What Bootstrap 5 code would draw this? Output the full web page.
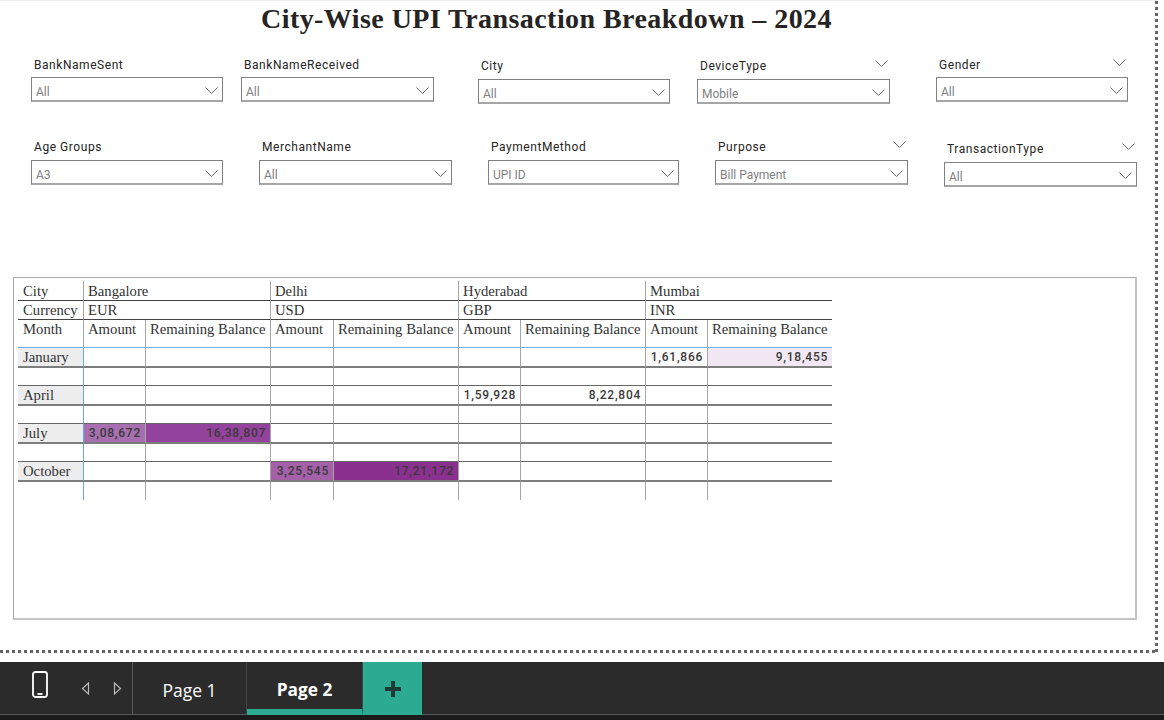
<!DOCTYPE html>
<html lang="en">

<head>
    <meta charset="UTF-8">
    <title>City-Wise UPI Transaction Breakdown</title>

    <link href="https://cdn.jsdelivr.net/npm/bootstrap@5.3.0/dist/css/bootstrap.min.css" rel="stylesheet">

    <style>
        html, body {
            height: 720px;
            overflow: hidden;
            background: #fff;
        }

        /* report canvas with the dotted page edge */
        .canvas-area {
            width: 1158px;
            height: 653px;
            margin-bottom: 9px;
            padding-top: 1px;
            border-top: 1px solid #efefef;
            background-image:
                linear-gradient(to right, #666 50%, transparent 50%),
                linear-gradient(to bottom, #666 50%, transparent 50%);
            background-size: 6px 3px, 3px 6px;
            background-position: left bottom, right top;
            background-repeat: repeat-x, repeat-y;
        }

        .report-title {
            font-family: "Liberation Serif", serif;
            font-weight: 700;
            font-size: 28px;
            line-height: 32px;
            letter-spacing: .44px;
            color: #252423;
            margin: 1px 0 0 261px;
            white-space: nowrap;
        }

        .slicer-row { height: 82px; }
        .slicer-row-1 { margin-top: 21px; }
        .slicer-row-2 { height: 139px; }

        .slicer {
            flex: none;
            font-family: Roboto, sans-serif;
        }

        .slicer-down { padding-top: 2px; }
        .slicer-row-1 .slicer-down { padding-top: 1px; }

        .slicer-head {
            display: flex;
            justify-content: space-between;
            align-items: center;
            height: 18px;
            padding: 0 2px 0 3px;
            font-size: 12px;
            letter-spacing: .55px;
            color: #252423;
        }

        .slicer-row-1 .slicer-head { margin-bottom: 3px; }
        .slicer-row-2 .slicer-head,
        .slicer-row-1 .slicer-down .slicer-head { margin-bottom: 4px; }
        .slicer-head .chev { margin-bottom: 5px; }

        .slicer-box {
            display: flex;
            justify-content: space-between;
            align-items: center;
            height: 25px;
            padding: 6px 4px 0 4px;
            border: 1px solid #808080;
            border-bottom: 2px solid #a6a6a6;
            font-size: 12px;
            color: #7f7f7f;
        }

        .slicer-box .chev { margin-bottom: 3px; }

        .chev {
            width: 13px;
            height: 7px;
            flex: none;
            fill: none;
            stroke: #666;
            stroke-width: 1;
        }

        /* matrix visual */
        .matrix-frame {
            width: 1124px;
            height: 343px;
            margin-left: 13px;
            padding: 3px 0 0 4px;
            border-style: solid;
            border-width: 1px 2px 2px 1px;
            border-color: #a9a9a9 #c4c4c4 #c4c4c4 #a9a9a9;
        }

        .matrix {
            table-layout: fixed;
            width: 814px;
            border-collapse: separate;
            border-spacing: 0;
            font-family: "Liberation Serif", serif;
            font-size: 14.700px;
            color: #333;
        }

        .matrix td {
            padding: 1px 4px 0;
            height: 20px;
            line-height: 17px;
            white-space: nowrap;
            overflow: hidden;
            border-left: 1px solid #a6a6a6;
            border-bottom: 2px solid #7d7d7d;
            vertical-align: middle;
        }

        .matrix td:first-child {
            border-left: 0;
            padding-left: 5px;
        }

        .matrix tr.head-top td {
            height: 19px;
            border-bottom: 1px solid #444;
        }

        .matrix tr.head-top:first-child td { padding-top: 2px; }

        .matrix tr.head-month td {
            height: 28px;
            vertical-align: top;
            padding-top: 1px;
            border-bottom: 1px solid #6fb0ea;
        }

        .matrix tr.row-blank td {
            height: 18px;
            border-bottom: 1px solid #666;
        }

        .matrix tr.row-last td {
            height: 18px;
            border-bottom: 0;
        }

        .matrix tr > td.blue-left { border-left: 1px solid #64aaee; }
        .matrix td.month-cell { background: #ededed; }

        .matrix td.num {
            font-family: Roboto, sans-serif;
            font-size: 12px;
            font-weight: 500;
            letter-spacing: .75px;
            text-align: right;
            color: #3a3a3a;
        }

        .matrix td.fill-a { background: #a76fb0; }
        .matrix td.fill-b { background: #93439b; }
        .matrix td.fill-c { background: #a461aa; }
        .matrix td.fill-d { background: #8a318f; }
        .matrix td.fill-e { background: #f1e8f3; }
        .matrix td.fill-f { background: #fafafa; }

        /* page tab strip */
        .tab-strip {
            height: 58px;
            background: #2b2b2b;
            border-bottom: 5px solid #1b1b1b;
            box-shadow: inset 0 -1px 0 #5a5a5a;
            font-family: "Open Sans", sans-serif;
            color: #fff;
        }

        .strip-tools {
            width: 133px;
            height: 53px;
            flex: none;
            border-right: 1px solid #5a5a5a;
        }

        .strip-tools svg { position: absolute; }
        .tool-wrap { position: relative; }

        .page-tab {
            flex: none;
            height: 53px;
            font-size: 17.500px;
            line-height: 56px;
            text-align: center;
        }

        .page-tab-1 { width: 114px; border-right: 1px solid #444; }

        .page-tab-2 {
            width: 116px;
            font-weight: 700;
            font-size: 17.300px;
            border-bottom: 6px solid #2aab92;
            border-right: 1px solid #444;
        }

        .add-tab {
            width: 59px;
            height: 53px;
            flex: none;
            background: #2aab92;
        }
    </style>
</head>

<body>
    <div class="canvas-area">
        <h1 class="report-title">City-Wise UPI Transaction Breakdown – 2024</h1>

        <div id="filterRows"></div>

        <div class="matrix-frame">
            <table class="matrix" id="matrix">
                <colgroup>
                    <col style="width:65px"><col style="width:62px"><col style="width:125px">
                    <col style="width:63px"><col style="width:125px"><col style="width:62px">
                    <col style="width:125px"><col style="width:62px"><col style="width:125px">
                </colgroup>
                <tbody id="matrixBody"></tbody>
            </table>
        </div>
    </div>

    <div class="tab-strip d-flex">
        <div class="strip-tools tool-wrap">
            <svg style="left:32px;top:9px" width="16" height="28" viewBox="0 0 16 28" fill="none" stroke="#fff" stroke-width="1.8">
                <rect x="1" y="1" width="14" height="25" rx="2.5"></rect>
                <path d="M5.500 23h5"></path>
            </svg>
            <svg style="left:81px;top:20px" width="9" height="13" viewBox="0 0 9 13" fill="none" stroke="#b8b8b8" stroke-width="1.2">
                <path d="M7.500 1 1.500 6.500 7.500 12Z"></path>
            </svg>
            <svg style="left:113px;top:20px" width="9" height="13" viewBox="0 0 9 13" fill="none" stroke="#b8b8b8" stroke-width="1.2">
                <path d="M1.500 1 7.500 6.500 1.500 12Z"></path>
            </svg>
        </div>
        <div class="page-tab page-tab-1">Page 1</div>
        <div class="page-tab page-tab-2">Page 2</div>
        <div class="add-tab d-flex align-items-center justify-content-center">
            <svg width="18" height="18" viewBox="0 0 18 18" fill="#1d3a35">
                <path d="M7 1h4v6h6v4h-6v6H7v-6H1V7h6Z"></path>
            </svg>
        </div>
    </div>

    <script>
        const chev = '<svg class="chev" viewBox="0 0 13 7"><path d="M.5.5 6.500 6.500 12.500.5"></path></svg>';

        // gap = space before the slicer, w = its width, down = sits lower, arrow = chevron in the header
        const filterRows = [
            [
                { label: 'BankNameSent', value: 'All', gap: 31, w: 192 },
                { label: 'BankNameReceived', value: 'All', gap: 18, w: 193 },
                { label: 'City', value: 'All', gap: 44, w: 192, down: true },
                { label: 'DeviceType', value: 'Mobile', gap: 27, w: 193, down: true, arrow: true },
                { label: 'Gender', value: 'All', gap: 46, w: 192, arrow: true }
            ],
            [
                { label: 'Age Groups', value: 'A3', gap: 31, w: 192 },
                { label: 'MerchantName', value: 'All', gap: 36, w: 193 },
                { label: 'PaymentMethod', value: 'UPI ID', gap: 36, w: 191 },
                { label: 'Purpose', value: 'Bill Payment', gap: 36, w: 193, arrow: true },
                { label: 'TransactionType', value: 'All', gap: 36, w: 193, down: true, arrow: true }
            ]
        ];

        const monthRows = [
            ['January', { 7: ['1,61,866', 'fill-f'], 8: ['9,18,455', 'fill-e'] }],
            ['April', { 5: ['1,59,928', ''], 6: ['8,22,804', ''] }],
            ['July', { 1: ['3,08,672', 'fill-a'], 2: ['16,38,807', 'fill-b'] }],
            ['October', { 3: ['3,25,545', 'fill-c'], 4: ['17,21,172', 'fill-d'] }]
        ];

        function renderFilters() {
            document.getElementById('filterRows').innerHTML = filterRows.map((row, i) => `
                <div class="d-flex slicer-row slicer-row-${i + 1}">
                    ${row.map(s => `
                        <div class="slicer ${s.down ? 'slicer-down' : ''}" style="margin-left:${s.gap}px;width:${s.w}px">
                            <div class="slicer-head"><span>${s.label}</span>${s.arrow ? chev : ''}</div>
                            <div class="slicer-box"><span>${s.value}</span>${chev}</div>
                        </div>`).join('')}
                </div>`).join('');
        }

        function renderMatrix() {
            const span2 = text => `<td colspan="2">${text}</td>`;
            let html = '';
            html += `<tr class="head-top"><td>City</td>${['Bangalore', 'Delhi', 'Hyderabad', 'Mumbai'].map(span2).join('')}</tr>`;
            html += `<tr class="head-top"><td>Currency</td>${['EUR', 'USD', 'GBP', 'INR'].map(span2).join('')}</tr>`;
            html += `<tr class="head-month"><td>Month</td>${'<td>Amount</td><td>Remaining Balance</td>'.repeat(4)}</tr>`;

            monthRows.forEach(([month, cells], r) => {
                html += `<tr><td class="month-cell">${month}</td>`;
                for (let c = 1; c <= 8; c++) {
                    const cell = cells[c];
                    const blue = c === 1 ? 'blue-left' : '';
                    html += cell
                        ? `<td class="num ${blue} ${cell[1]}">${cell[0]}</td>`
                        : `<td class="${blue}"></td>`;
                }
                html += '</tr>';
                const cls = r === monthRows.length - 1 ? 'row-last' : 'row-blank';
                html += `<tr class="${cls}"><td></td><td class="blue-left"></td>${'<td></td>'.repeat(7)}</tr>`;
            });
            document.getElementById('matrixBody').innerHTML = html;
        }

        renderFilters();
        renderMatrix();
    </script>

    <script src="https://cdn.jsdelivr.net/npm/bootstrap@5.3.0/dist/js/bootstrap.bundle.min.js"></script>
</body>

</html>
